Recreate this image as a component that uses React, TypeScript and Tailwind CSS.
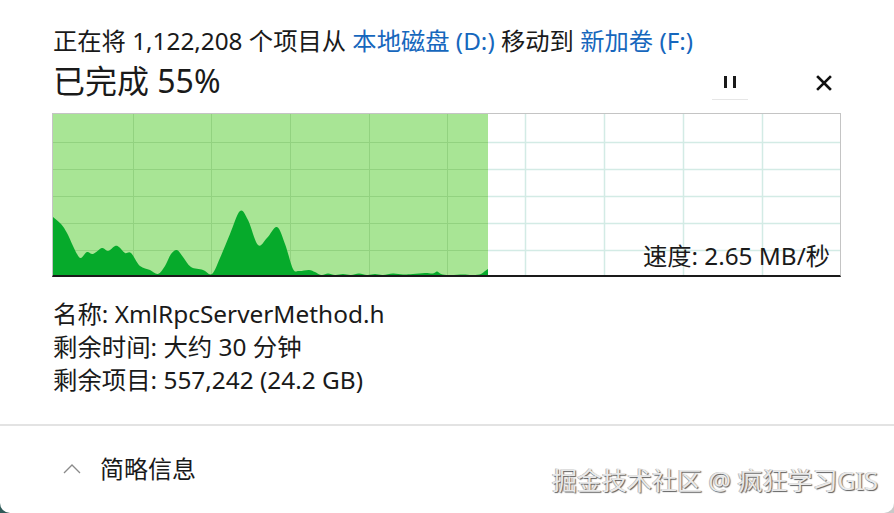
import React from "react";

const FONT = '"Noto Sans", "Noto Sans CJK SC", sans-serif';

// waveform samples in chart coords (787 x 162)
const WAVE: [number, number][] = [
  [0, 103], [8, 110], [14, 119], [20, 132], [24, 140], [28, 144], [34, 138], [40, 140],
  [49, 134], [55, 137], [62, 132], [66, 133], [72, 139], [78, 139], [87, 152], [97, 156],
  [105, 160], [112, 152], [118, 140], [124, 136], [130, 143], [138, 153], [150, 156],
  [159, 160], [167, 144], [177, 120], [187, 97], [195, 106], [205, 131], [214, 124],
  [224, 113], [232, 130], [240, 155], [246, 157], [256, 156], [262, 158], [268, 161],
  [275, 159.5], [282, 161], [290, 160], [298, 161], [306, 159.5], [314, 161], [322, 160],
  [330, 161], [340, 159.5], [350, 160.5], [360, 160], [372, 159], [380, 159.5],
  [384, 157.5], [388, 160], [396, 161], [410, 160.5], [420, 161], [428, 160], [432, 157],
  [435, 155],
];

function smoothArea(pts: [number, number][], base: number) {
  let d = `M${pts[0][0]},${base} L${pts[0][0]},${pts[0][1]}`;
  for (let i = 0; i < pts.length - 1; i++) {
    const p0 = pts[i - 1] || pts[i];
    const p1 = pts[i];
    const p2 = pts[i + 1];
    const p3 = pts[i + 2] || p2;
    const c1x = p1[0] + (p2[0] - p0[0]) / 6;
    const c1y = p1[1] + (p2[1] - p0[1]) / 6;
    const c2x = p2[0] - (p3[0] - p1[0]) / 6;
    const c2y = p2[1] - (p3[1] - p1[1]) / 6;
    d += ` C${c1x.toFixed(1)},${c1y.toFixed(1)} ${c2x.toFixed(1)},${c2y.toFixed(1)} ${p2[0]},${p2[1]}`;
  }
  d += ` L${pts[pts.length - 1][0]},${base} Z`;
  return d;
}

const DONE_W = 435;
const VLINES = [80, 158, 237, 316, 394, 472, 551, 630, 709];
const HLINES = [28, 55, 82, 109, 136];

function SpeedChart() {
  return (
    <div className="relative mx-[52px] mt-[12px] h-[164px] w-[789px] border border-[#c4c4c4] border-b-[2px] border-b-[#1a1a1a]">
      <svg width="787" height="161" viewBox="0 0 787 161" className="block">
        {HLINES.map((y) => (
          <line key={"hw" + y} x1={DONE_W} x2={787} y1={y + 0.5} y2={y + 0.5} stroke="#d3ebe5" strokeWidth="1.5" />
        ))}
        {VLINES.filter((x) => x > DONE_W).map((x) => (
          <line key={"vw" + x} x1={x + 0.5} x2={x + 0.5} y1={0} y2={161} stroke="#d3ebe5" strokeWidth="1.5" />
        ))}
        <rect x="0" y="0" width={DONE_W} height="161" fill="#a8e595" />
        {HLINES.map((y) => (
          <line key={"hg" + y} x1={0} x2={DONE_W} y1={y + 0.5} y2={y + 0.5} stroke="#92d280" strokeWidth="1" />
        ))}
        {VLINES.filter((x) => x < DONE_W).map((x) => (
          <line key={"vg" + x} x1={x + 0.5} x2={x + 0.5} y1={0} y2={161} stroke="#92d280" strokeWidth="1" />
        ))}
        <path d={smoothArea(WAVE, 162)} fill="#06aa2b" />
      </svg>
      <div className="absolute right-[10px] bottom-[3px] text-[24.3px] leading-[32px] text-[#1a1a1a]">
        速度: 2.65 MB/秒
      </div>
    </div>
  );
}

export default function App() {
  return (
    <div
      className="h-[513px] w-[894px] bg-gradient-to-r from-[#2f5a58] via-[#9aa5a5] to-[#c9c9c9]"
      style={{ fontFamily: FONT }}
    >
      <div className="flex h-[513px] flex-col overflow-hidden rounded-b-[10px] bg-white text-[#1a1a1a]">
        <div className="px-[53px] pt-[25px]">
          <div className="text-[24.3px] leading-[32px] whitespace-nowrap">
            正在将 1,122,208 个项目从 <span className="text-[#1667bd]">本地磁盘 (D:)</span> 移动到{" "}
            <span className="text-[#1667bd]">新加卷 (F:)</span>
          </div>
          <div className="mt-[4px] flex h-[40px] items-center">
            <div className="text-[32px] leading-[40px]">已完成 55%</div>
            <div className="ml-auto flex items-center">
              <button className="flex h-[37px] w-[36px] items-center justify-center gap-[6px] border-b border-b-[#e6e6e6] pt-[3px]">
                <span className="h-[12px] w-[3px] bg-[#1a1a1a]" />
                <span className="h-[12px] w-[3px] bg-[#1a1a1a]" />
              </button>
              <button className="ml-[58px] mr-[-1px] flex h-[36px] w-[36px] items-center justify-center pt-[4px]">
                <svg width="16" height="16" viewBox="0 0 16 16">
                  <path d="M2 2 L14 14 M14 2 L2 14" stroke="#111" strokeWidth="2.6" strokeLinecap="square" />
                </svg>
              </button>
            </div>
          </div>
        </div>

        <SpeedChart />

        <div className="mt-[20px] px-[53px] text-[24.4px] leading-[33px]">
          <div>名称: XmlRpcServerMethod.h</div>
          <div>剩余时间: 大约 30 分钟</div>
          <div>剩余项目: 557,242 (24.2 GB)</div>
        </div>

        <div className="mt-[28px] border-t-2 border-t-[#e3e3e3]" />

        <div className="flex flex-1 items-start">
          <div className="mt-[27px] flex items-center pl-[63px]">
            <svg width="18" height="10" viewBox="0 0 18 10">
              <path d="M1 9 L9 1 L17 9" fill="none" stroke="#8a8a8a" strokeWidth="1.3" />
            </svg>
            <span className="ml-[19px] text-[24px] leading-[32px]">简略信息</span>
          </div>
          <div className="mt-[38px] ml-auto mr-[16px] text-[25px] leading-[32px] text-[#e9e9e9] [text-shadow:1px_1px_1px_rgba(40,40,40,0.75),-1px_0_0_rgba(120,120,120,0.5)]">
            掘金技术社区 @ 疯狂学习GIS
          </div>
        </div>
      </div>
    </div>
  );
}
